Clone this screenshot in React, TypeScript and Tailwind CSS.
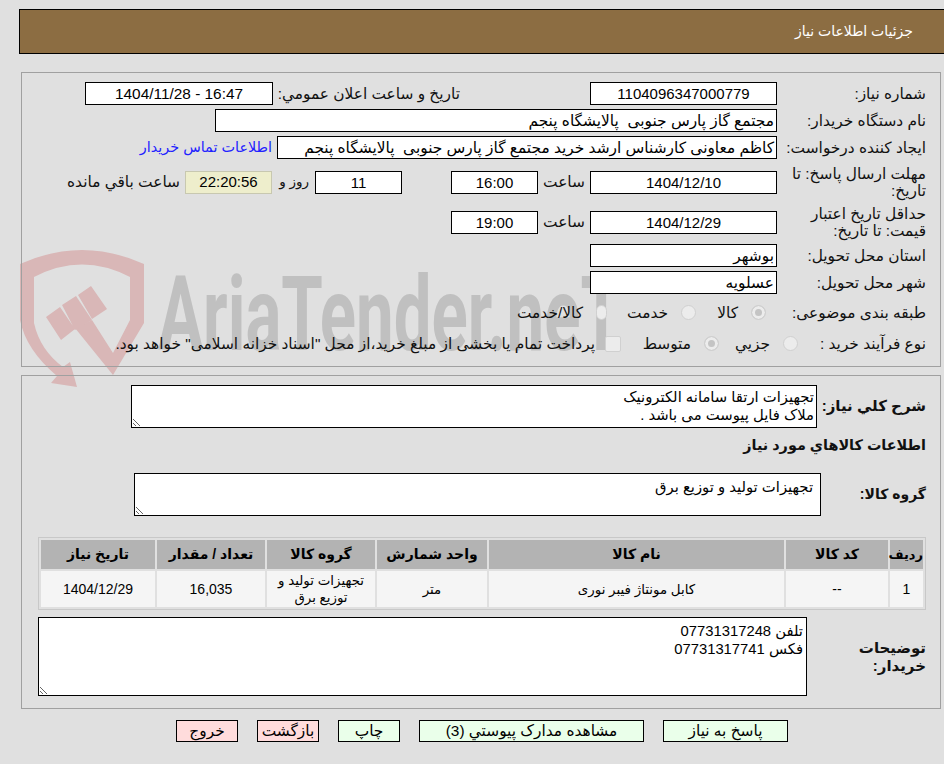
import React from 'react';

const BOX = 'h-[23px] shrink-0 border border-black bg-white flex items-center text-black leading-none whitespace-pre';

const Box = ({ w, center, children }: { w: string; center?: boolean; children: React.ReactNode }) => (
  <div className={`${BOX} ${w} ${center ? 'justify-center text-[15px]' : 'px-[2px]'}`}>{children}</div>
);

const Choice = ({ w, label, checked }: { w: string; label: string; checked?: boolean }) => (
  <label className={`flex items-center gap-[13px] shrink-0 ${w}`}>
    <input
      type="radio"
      disabled
      defaultChecked={checked}
      className={`appearance-none w-[15px] h-[15px] rounded-full border border-[#d0d0d0] ${checked ? 'bg-[#c4c4c4] ring-[3px] ring-inset ring-[#ececec]' : 'bg-[#ececec]'}`}
    />
    <span className="whitespace-nowrap">{label}</span>
  </label>
);

const HEAD = 'bg-[#b3b3b3] font-bold text-[14px] text-center text-black h-[29px] p-0';
const CELL = 'bg-[#f5f5f5] text-[13.4px] text-center text-black h-[36px] p-0 leading-[17px]';
const NUM = 'bg-[#f5f5f5] text-[14px] text-center text-black h-[36px] p-0';

const Action = ({ w, pink, children }: { w: string; pink?: boolean; children: React.ReactNode }) => (
  <button className={`h-[22px] shrink-0 border border-black text-black leading-none ${w} ${pink ? 'bg-[#ffdcdc]' : 'bg-[#eaffea]'}`}>
    {children}
  </button>
);

export default function App() {
  return (
    <div className="relative h-[764px] w-[944px] overflow-hidden bg-[#e0e0e0] font-['Liberation_Sans','DejaVu_Sans',sans-serif] text-[15.4px] text-[#111]">
      {/* watermark, sits behind the form */}
      <svg className="absolute left-0 top-0" width="944" height="764" aria-hidden="true">
        <path
          fill="#d9b7b7"
          d="M20 264 Q82 236 144 264 L144 323 L113 375 L75 328 L92 320 L113 353 L130 320 L130 277 Q82 252 34 277 L34 323 Q40 350 63 367 L70 362 L77 387 L51 383 L57 376 Q26 350 20 320 Z"
        />
        <path fill="#d9b7b7" d="M46 317 L60 307 L75 329 L61 340 Z M62 305 L76 296 L92 320 L75 330 Z M78 295 L91 286 L107 309 L92 319 Z" />
        <text
          x="158"
          y="350"
          textLength="464"
          lengthAdjust="spacingAndGlyphs"
          fill="#c0c0c0"
          fontFamily="Roboto, sans-serif"
          fontWeight="700"
          fontSize="104"
        >
          AriaTender.neT
        </text>
      </svg>

      <div dir="rtl" className="relative pt-[9px]">
        {/* title bar */}
        <div className="ml-[19px] flex h-[45px] items-center border border-r-0 border-black bg-[#8c6d42] pr-[31px] text-[14px] text-white">
          جزئیات اطلاعات نیاز
        </div>

        {/* need details */}
        <div className="ml-[21px] mr-[3px] mt-[18px] h-[295px] border border-[#a0a0a0] pr-[14px] pt-[9px]">
          <div className="flex h-[23px] items-center">
            <div className="w-[149px] shrink-0">شماره نیاز:</div>
            <Box w="w-[187px]" center>1104096347000779</Box>
            <div className="mr-[130px] w-[187px] shrink-0">تاریخ و ساعت اعلان عمومي:</div>
            <Box w="w-[188px]" center><span dir="ltr" className="text-[15.4px]">1404/11/28 - 16:47</span></Box>
          </div>
          <div className="mt-[4px] flex h-[23px] items-center">
            <div className="w-[149px] shrink-0">نام دستگاه خریدار:</div>
            <Box w="w-[562px]">مجتمع گاز پارس جنوبی  پالایشگاه پنجم</Box>
          </div>
          <div className="mt-[4px] flex h-[23px] items-center">
            <div className="w-[149px] shrink-0">ایجاد کننده درخواست:</div>
            <Box w="w-[500px]">کاظم معاونی کارشناس ارشد خرید مجتمع گاز پارس جنوبی  پالایشگاه پنجم</Box>
            <a className="mr-[5px] whitespace-nowrap text-[14.4px] text-[#2222ff]">اطلاعات تماس خریدار</a>
          </div>
          <div className="mt-[6px] flex h-[34px] items-center">
            <div className="w-[149px] shrink-0 leading-[17px]">مهلت ارسال پاسخ: تا تاریخ:</div>
            <Box w="w-[187px]" center>1404/12/10</Box>
            <div className="w-[52px] shrink-0 text-center">ساعت</div>
            <Box w="w-[87px]" center>16:00</Box>
            <Box w="mr-[49px] w-[87px]" center>11</Box>
            <div className="w-[43px] shrink-0 pr-[6px] text-[13.5px]">روز و</div>
            <div className="flex h-[23px] w-[87px] shrink-0 items-center justify-center border border-[#c8c8b0] bg-[#eeeecc] text-[15px] text-black">22:20:56</div>
            <div className="mr-[5px] shrink-0 whitespace-nowrap">ساعت باقي مانده</div>
          </div>
          <div className="mt-[6px] flex h-[34px] items-center">
            <div className="w-[149px] shrink-0 leading-[17px]">حداقل تاریخ اعتبار قیمت: تا تاریخ:</div>
            <Box w="w-[187px]" center>1404/12/29</Box>
            <div className="w-[52px] shrink-0 text-center">ساعت</div>
            <Box w="w-[87px]" center>19:00</Box>
          </div>
          <div className="mt-[5px] flex h-[23px] items-center">
            <div className="w-[149px] shrink-0">استان محل تحویل:</div>
            <Box w="w-[187px]">بوشهر</Box>
          </div>
          <div className="mt-[4px] flex h-[23px] items-center">
            <div className="w-[149px] shrink-0">شهر محل تحویل:</div>
            <Box w="w-[187px]">عسلویه</Box>
          </div>
          <div className="mt-[7px] flex h-[23px] items-center">
            <div className="w-[160px] shrink-0">طبقه بندی موضوعی:</div>
            <Choice w="w-[70px]" label="کالا" checked />
            <Choice w="w-[89px]" label="خدمت" />
            <Choice w="w-[90px]" label="کالا/خدمت" />
          </div>
          <div className="mt-[8px] flex h-[23px] items-center">
            <div className="w-[128px] shrink-0">نوع فرآیند خرید :</div>
            <Choice w="w-[79px]" label="جزيي" />
            <Choice w="w-[98px]" label="متوسط" checked />
            <span className="h-[16px] w-[16px] shrink-0 rounded-[2px] border border-[#d0d0d0] bg-[#ececec]" />
            <span className="mr-[10px] whitespace-nowrap">پرداخت تمام یا بخشی از مبلغ خرید،از محل "اسناد خزانه اسلامی" خواهد بود.</span>
          </div>
        </div>

        {/* goods */}
        <div className="ml-[21px] mr-[3px] mt-[8px] h-[334px] border border-[#a0a0a0] pl-[16px] pr-[14px] pt-[9px]">
          <div className="flex items-center">
            <div className="w-[109px] shrink-0 text-[15px] font-bold">شرح كلي نياز:</div>
            <textarea
              readOnly
              className="h-[43px] w-[686px] shrink-0 border border-black bg-white px-[2px] py-[2px] text-[14.8px] leading-[18px] text-black outline-none"
              defaultValue={'تجهیزات ارتقا سامانه الکترونیک\nملاک فایل پیوست می باشد .'}
            />
          </div>
          <div className="mt-[7px] text-[14.4px] font-bold leading-[20px]">اطلاعات كالاهاي مورد نياز</div>
          <div className="mt-[18px] flex items-center">
            <div className="w-[105px] shrink-0 text-[14px] font-bold">گروه کالا:</div>
            <textarea
              readOnly
              className="h-[43px] w-[687px] shrink-0 border border-black bg-white px-[7px] py-[4px] text-[14.8px] leading-[18px] text-black outline-none"
              defaultValue="تجهیزات تولید و توزیع برق"
            />
          </div>
          <table className="mt-[21px] w-[888px] table-fixed border-separate border-spacing-[2px] border border-[#c8c8c8]">
            <colgroup>
              <col className="w-[33px]" />
              <col className="w-[102px]" />
              <col className="w-[295px]" />
              <col className="w-[110px]" />
              <col className="w-[108px]" />
              <col className="w-[108px]" />
              <col />
            </colgroup>
            <thead>
              <tr>
                <th className="h-[29px] bg-[#b3b3b3] p-0 text-center text-[13px] font-bold text-black">ردیف</th>
                <th className={HEAD}>کد کالا</th>
                <th className={HEAD}>نام کالا</th>
                <th className={HEAD}>واحد شمارش</th>
                <th className={HEAD}>گروه کالا</th>
                <th className={HEAD}>تعداد / مقدار</th>
                <th className={HEAD}>تاریخ نیاز</th>
              </tr>
            </thead>
            <tbody>
              <tr>
                <td className={NUM}>1</td>
                <td className={NUM}>--</td>
                <td className={CELL}>کابل مونتاژ فیبر نوری</td>
                <td className={CELL}>متر</td>
                <td className={CELL}>تجهیزات تولید و توزیع برق</td>
                <td className={NUM}>16,035</td>
                <td className={NUM}>1404/12/29</td>
              </tr>
            </tbody>
          </table>
          <div className="mt-[7px] flex items-center">
            <div className="w-[119px] shrink-0 text-[15px] font-bold leading-[18px]">توضیحات<br />خریدار:</div>
            <textarea
              readOnly
              className="h-[79px] w-[769px] shrink-0 border border-black bg-white px-[3px] py-[4px] text-[14.8px] leading-[18px] text-black outline-none"
              defaultValue={'تلفن 07731317248\nفکس 07731317741'}
            />
          </div>
        </div>

        {/* actions */}
        <div className="mt-[11px] flex gap-[19px] pr-[156px]">
          <Action w="w-[125px]">پاسخ به نیاز</Action>
          <Action w="w-[225px]">مشاهده مدارک پیوستي (3)</Action>
          <Action w="w-[62px]">چاپ</Action>
          <Action w="w-[62px]" pink>بازگشت</Action>
          <Action w="w-[62px]" pink>خروج</Action>
        </div>
      </div>
    </div>
  );
}
